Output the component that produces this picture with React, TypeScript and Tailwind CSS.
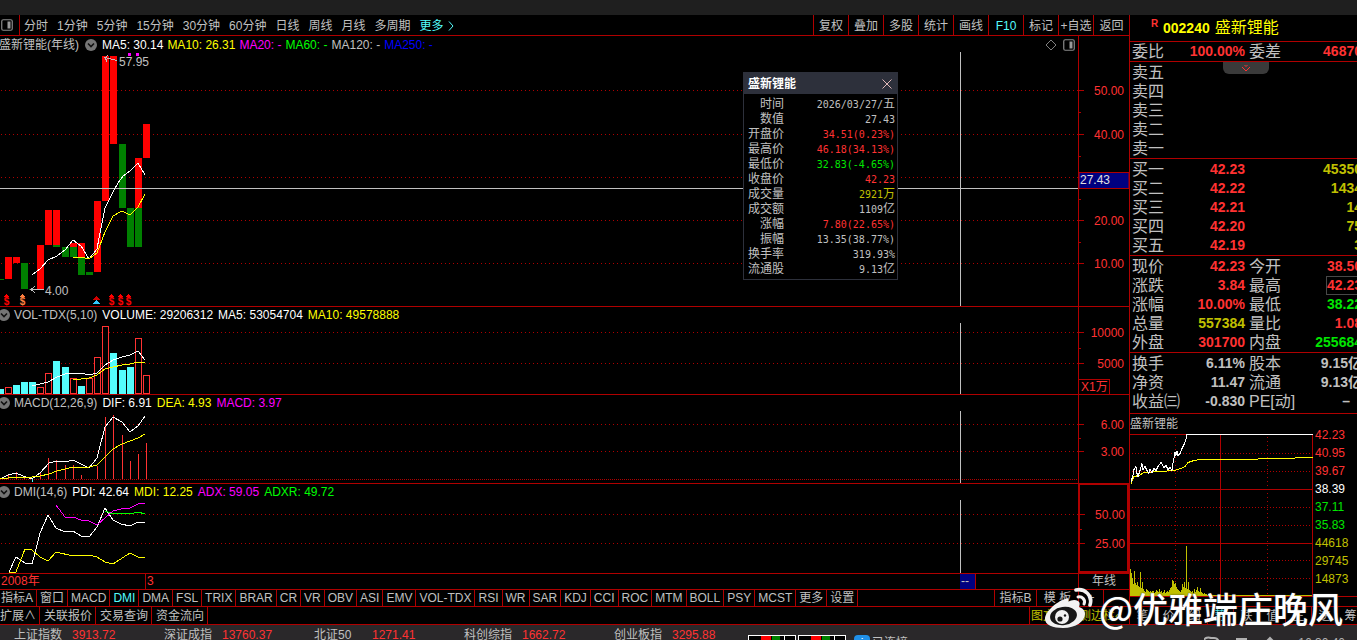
import React, { useState } from 'react';

type Point = [number, number];

interface Readout {
  text: string;
  color: string;
}

interface AxisProps {
  top: number;
  labels: { y: number; text: string }[];
  ticks: number[];
  minor: number[];
  selected?: boolean;
  children?: React.ReactNode;
}

interface PanelProps {
  top: number;
  title: React.ReactNode;
  readouts: Readout[];
  headerClass: string;
  plotClass: string;
  grid: number[];
  extra?: React.ReactNode;
  axis: React.ReactNode;
  children: React.ReactNode;
}

interface QuoteRow {
  label: string;
  value?: string;
  color?: string;
  label2?: string;
  value2?: string;
  color2?: string;
  boxed?: boolean;
}

const RED = '#ff0000';
const GREEN = '#008000';
const LINE = '#b00000';
const HEADER_H = 16;
const CURSOR_X = 960;

const periods = ['分时', '1分钟', '5分钟', '15分钟', '30分钟', '60分钟', '日线', '周线', '月线', '多周期'];
const tools = ['复权', '叠加', '多股', '统计', '画线', 'F10', '标记', '+自选', '返回'];
const indicators = [
  '指标A', '窗口', 'MACD', 'DMI', 'DMA', 'FSL', 'TRIX', 'BRAR', 'CR', 'VR', 'OBV', 'ASI', 'EMV', 'VOL-TDX',
  'RSI', 'WR', 'SAR', 'KDJ', 'CCI', 'ROC', 'MTM', 'BOLL', 'PSY', 'MCST', '更多', '设置'
];
const shortcuts = ['扩展∧', '关联报价', '交易查询', '资金流向'];
const sideTabs = ['笔', '价', '细', '势', '联', '值', '主', '逆', '筹'];

const indices = [
  { name: '上证指数', value: '3913.72' },
  { name: '深证成指', value: '13760.37' },
  { name: '北证50', value: '1271.41' },
  { name: '科创综指', value: '1662.72' },
  { name: '创业板指', value: '3295.88' }
];

// x, top, bottom, color
const candles: [number, number, number, string][] = [
  [-3, 279, 280, GREEN],
  [5, 257, 279, RED],
  [13, 257, 263, RED],
  [21, 263, 289, GREEN],
  [29, 289, 290, GREEN],
  [37, 245, 290, RED],
  [45, 210, 245, RED],
  [53, 210, 245, RED],
  [53, 245, 247, GREEN],
  [62, 247, 257, GREEN],
  [70, 243, 247, RED],
  [70, 247, 257, GREEN],
  [78, 243, 258, RED],
  [78, 258, 275, GREEN],
  [86, 272, 275, GREEN],
  [94, 201, 272, RED],
  [102, 56, 201, RED],
  [110, 56, 144, RED],
  [119, 144, 208, GREEN],
  [127, 208, 247, GREEN],
  [135, 158, 208, RED],
  [135, 208, 247, GREEN],
  [143, 124, 158, RED]
];

// x, top, rising
const volumes: [number, number, boolean][] = [
  [-3, 389, false], [5, 387, true], [13, 385, false], [21, 382, false], [29, 382, false],
  [37, 387, true], [45, 373, true], [53, 361, false], [62, 367, false], [70, 378, true],
  [78, 386, false], [86, 378, true], [94, 357, true], [102, 326, true], [110, 353, false],
  [119, 370, false], [127, 367, false], [135, 338, true], [143, 375, true]
];

const macdBars: Point[] = [
  [8, 475], [16, 472], [24, 477], [40, 473], [48, 458], [56, 460], [65, 465], [73, 465], [81, 475],
  [97, 466], [105, 417], [113, 415], [122, 435], [130, 461], [138, 454], [146, 443]
];

const ma5: Point[] = [
  [32, 275], [40, 269], [48, 260], [57, 256], [65, 250], [73, 240], [81, 246], [89, 259], [97, 249], [99, 238],
  [102, 223], [105, 208], [113, 192], [118, 183], [123, 176], [130, 171], [138, 163], [145, 175]
];
const ma10: Point[] = [
  [73, 258], [81, 257], [89, 259], [97, 253], [105, 232], [113, 216], [122, 211], [130, 215], [138, 207], [145, 194]
];
const volMa5: Point[] = [
  [32, 386], [40, 384], [48, 382], [57, 377], [65, 374], [73, 373], [81, 373], [89, 375], [97, 373], [105, 365],
  [113, 360], [122, 357], [130, 355], [138, 351], [145, 360]
];
const volMa10: Point[] = [
  [73, 379], [81, 379], [89, 378], [97, 375], [105, 369], [113, 367], [122, 365], [130, 364], [138, 362], [145, 363]
];
const dif: Point[] = [
  [0, 479], [8, 475], [16, 473], [23, 476], [32, 479], [40, 473], [49, 463], [57, 461], [65, 462], [73, 460],
  [81, 464], [89, 468], [97, 458], [105, 427], [113, 417], [122, 422], [130, 432], [138, 426], [145, 416]
];
const dea: Point[] = [
  [0, 479], [16, 477], [32, 477], [40, 476], [49, 474], [57, 471], [65, 469], [73, 467], [89, 467], [97, 465],
  [105, 457], [113, 449], [122, 444], [130, 441], [138, 438], [145, 434]
];
const pdi: Point[] = [
  [9, 572], [16, 557], [25, 563], [32, 564], [35, 553], [40, 533], [48, 515], [56, 528], [65, 532], [73, 531],
  [81, 536], [89, 537], [97, 527], [105, 508], [113, 520], [121, 524], [130, 526], [138, 522], [145, 522]
];
const mdi: Point[] = [
  [9, 572], [16, 572], [25, 549], [32, 550], [40, 557], [48, 561], [56, 552], [73, 556], [81, 555], [89, 555],
  [97, 557], [105, 562], [113, 564], [130, 553], [138, 557], [145, 557]
];
const adx: Point[] = [
  [56, 505], [65, 517], [73, 517], [81, 520], [89, 521], [97, 525], [105, 518], [113, 511], [121, 509],
  [130, 508], [138, 504], [145, 503]
];
const adxr: Point[] = [[105, 511], [113, 514], [121, 513], [130, 514], [138, 512], [145, 514]];

// Intraday chart, measured from its own top left corner
const dayPrice: Point[] = [
  [1, 48], [3, 42], [4, 36], [6, 33], [7, 40], [8, 43], [10, 37], [12, 30], [13, 36], [15, 33], [17, 37], [19, 40],
  [20, 36], [22, 39], [24, 35], [26, 37], [28, 33], [31, 29], [34, 34], [36, 32], [38, 36], [40, 34], [42, 37],
  [43, 30], [45, 19], [46, 22], [47, 18], [48, 22], [50, 20], [52, 15], [54, 11], [56, 6], [57, 1], [183, 1]
];
const dayAverage: Point[] = [
  [1, 50], [4, 43], [9, 42], [14, 39], [31, 38], [44, 37], [51, 35], [55, 33], [58, 29], [64, 27], [71, 26],
  [92, 26], [164, 25], [166, 24], [183, 24]
];
const dayVolume = [
  27, 23, 18, 12, 25, 13, 11, 14, 10, 9, 24, 8, 14, 7, 5, 4, 7, 6, 5, 4, 5, 4, 5, 5, 3, 4, 6, 5, 4, 7, 4, 5, 3, 4, 6,
  3, 4, 5, 4, 6, 8, 9, 16, 15, 12, 13, 9, 7, 6, 5, 4, 6, 12, 9, 14, 8, 50, 7, 14, 6, 5, 4, 5, 3, 7, 4, 6, 9, 5, 4, 8,
  4, 3, 2, 3, 2, 2, 1, 2, 1
];
const dayLabels = [
  { text: '42.23', color: '#ff3232' },
  { text: '40.95', color: '#ff3232' },
  { text: '39.67', color: '#ff3232' },
  { text: '38.39', color: '#ffffff' },
  { text: '37.11', color: '#00e600' },
  { text: '35.83', color: '#00e600' },
  { text: '44618', color: '#c0c000' },
  { text: '29745', color: '#c0c000' },
  { text: '14873', color: '#c0c000' }
];

const entrust: QuoteRow[] = [
  { label: '委比', value: '100.00%', color: 'text-[#ff3232]', label2: '委差', value2: '46870', color2: 'text-[#ff3232]' }
];
const asks: QuoteRow[] = [{ label: '卖五' }, { label: '卖四' }, { label: '卖三' }, { label: '卖二' }, { label: '卖一' }];
const bids: QuoteRow[] = [
  { label: '买一', value: '42.23', color: 'text-[#ff3232]', value2: '45350', color2: 'text-[#c0c000]' },
  { label: '买二', value: '42.22', color: 'text-[#ff3232]', value2: '1434', color2: 'text-[#c0c000]' },
  { label: '买三', value: '42.21', color: 'text-[#ff3232]', value2: '14', color2: 'text-[#c0c000]' },
  { label: '买四', value: '42.20', color: 'text-[#ff3232]', value2: '75', color2: 'text-[#c0c000]' },
  { label: '买五', value: '42.19', color: 'text-[#ff3232]', value2: '3', color2: 'text-[#c0c000]' }
];
const summary: QuoteRow[] = [
  { label: '现价', value: '42.23', color: 'text-[#ff3232]', label2: '今开', value2: '38.50', color2: 'text-[#ff3232]' },
  { label: '涨跌', value: '3.84', color: 'text-[#ff3232]', label2: '最高', value2: '42.23', color2: 'text-[#ff3232]', boxed: true },
  { label: '涨幅', value: '10.00%', color: 'text-[#ff3232]', label2: '最低', value2: '38.22', color2: 'text-[#00e600]' },
  { label: '总量', value: '557384', color: 'text-[#c0c000]', label2: '量比', value2: '1.08', color2: 'text-[#ff3232]' },
  { label: '外盘', value: '301700', color: 'text-[#ff3232]', label2: '内盘', value2: '255684', color2: 'text-[#00e600]' }
];
const fundamentals: QuoteRow[] = [
  { label: '换手', value: '6.11%', label2: '股本', value2: '9.15亿' },
  { label: '净资', value: '11.47', label2: '流通', value2: '9.13亿' },
  { label: '收益㈢', value: '-0.830', label2: 'PE[动]', value2: '–' }
];

const details = [
  { label: '时间', value: '2026/03/27/', unit: '五', color: 'text-[#c0c0c0]' },
  { label: '数值', value: '27.43', color: 'text-[#c0c0c0]' },
  { label: '开盘价', value: '34.51(0.23%)', color: 'text-[#ff3232]' },
  { label: '最高价', value: '46.18(34.13%)', color: 'text-[#ff3232]' },
  { label: '最低价', value: '32.83(-4.65%)', color: 'text-[#00e600]' },
  { label: '收盘价', value: '42.23', color: 'text-[#ff3232]' },
  { label: '成交量', value: '2921', unit: '万', color: 'text-[#c0c000]' },
  { label: '成交额', value: '1109', unit: '亿', color: 'text-[#c0c0c0]' },
  { label: '涨幅', value: '7.80(22.65%)', color: 'text-[#ff3232]' },
  { label: '振幅', value: '13.35(38.77%)', color: 'text-[#c0c0c0]' },
  { label: '换手率', value: '319.93%', color: 'text-[#c0c0c0]' },
  { label: '流通股', value: '9.13', unit: '亿', color: 'text-[#c0c0c0]' }
];

const Curve = ({ points, color }: { points: Point[]; color: string }) => (
  <polyline points={points.map((p) => p.join(',')).join(' ')} fill="none" stroke={color} strokeWidth="1" />
);

const ChevronBadge = () => (
  <svg className="h-3 w-3 shrink-0" viewBox="0 0 12 12" aria-hidden="true">
    <circle cx="6" cy="6" r="6" fill="#757575" />
    <path d="M3 4.5 6 7.5 9 4.5" fill="none" stroke="#111" strokeWidth="1.6" />
  </svg>
);

const SplitIcon = ({ className }: { className: string }) => (
  <svg className={className} viewBox="0 0 12 12" aria-hidden="true">
    <rect x="0.75" y="0.75" width="10.5" height="10.5" rx="1.5" fill="none" stroke="#8a8a8a" strokeWidth="1.2" />
    <rect x="6.5" y="2.5" width="3" height="7" fill="#9a9a9a" />
  </svg>
);

const Axis: React.FC<AxisProps> = ({ top, labels, ticks, minor, selected, children }) => (
  <div className={`w-[51px] shrink-0 border-[#b00000] ${selected ? '-mt-px border-2' : 'border-l'}`}>
    <svg className="block h-4 w-full overflow-visible" fontSize="12">
      <g transform={`translate(0,${-top})`}>
        {ticks.map((y) => (
          <rect key={y} x="0" y={y} width="5" height="1" fill={LINE} />
        ))}
        {minor.map((y) => (
          <rect key={y} x="0" y={y} width="2" height="1" fill={LINE} />
        ))}
        {labels.map((l) => (
          <text key={l.text} x="45" y={l.y + 5} textAnchor="end" fill="#ff3232">
            {l.text}
          </text>
        ))}
        {children}
      </g>
    </svg>
  </div>
);

const Panel: React.FC<PanelProps> = ({ top, title, readouts, headerClass, plotClass, grid, extra, axis, children }) => (
  <section className="flex border-b border-[#b00000]">
    <div className="min-w-0 flex-1 overflow-hidden">
      <header className={`flex h-4 items-center leading-4 whitespace-nowrap ${headerClass}`}>
        {title}
        {readouts.map((r) => (
          <span key={r.text} className={r.color}>{r.text}</span>
        ))}
        {extra}
      </header>
      <svg className={`block w-full ${plotClass}`} fontSize="12" shapeRendering="crispEdges">
        <g transform={`translate(0,${-(top + HEADER_H)})`}>
          {grid.map((y) => (
            <line key={y} x1="1" x2="100%" y1={y + 0.5} y2={y + 0.5} stroke={LINE} strokeDasharray="1 3" />
          ))}
          {children}
          <rect x={CURSOR_X} y={top + HEADER_H} width="1" height="300" fill="#c0c0c0" />
        </g>
      </svg>
    </div>
    {axis}
  </section>
);

const Signal = ({ x, color }: { x: number; color: string }) => (
  <g fill={color}>
    <path d={`M${x} 294l3 3h-6z`} />
    <text x={x} y="305" textAnchor="middle" fontSize="10" fontWeight="bold">$</text>
  </g>
);

const QuoteTable = ({ rows, className }: { rows: QuoteRow[]; className: string }) => (
  <div className={`border-b border-[#b00000] ${className}`}>
    <table className="w-[232px] table-fixed border-collapse leading-[19px] whitespace-nowrap">
      <colgroup>
        <col className="w-[35px]" />
        <col className="w-20" />
        <col className="w-11" />
        <col />
      </colgroup>
      <tbody>
        {rows.map((row) => (
          <tr key={row.label} className="h-[19px]">
            <th scope="row" className="p-0 pl-0.5 text-left align-middle text-base leading-[19px] font-normal">
              {row.label}
            </th>
            <td className={`p-0 text-right align-middle text-sm leading-[19px] font-bold ${row.color || ''}`}>{row.value}</td>
            <td className="p-0 pl-1 text-left align-middle text-base leading-[19px]">{row.label2}</td>
            <td className={`p-0 text-right align-middle text-sm leading-[19px] font-bold ${row.color2 || ''} ${row.value2 === '–' ? 'pr-3' : ''}`}>
              <span className={row.boxed ? 'inline-block leading-[17px] outline outline-[#484848]' : ''}>{row.value2}</span>
            </td>
          </tr>
        ))}
      </tbody>
    </table>
  </div>
);

const DetailWindow = ({ onClose }: { onClose: () => void }) => (
  <div className="absolute top-[57px] right-[459px] w-[155px] border border-[#2d303b] bg-black pb-0.5">
    <div className="flex h-[21px] items-center justify-between bg-[#2d303b] px-1 text-xs font-bold text-white">
      盛新锂能
      <button type="button" aria-label="关闭" onClick={onClose}>
        <svg className="h-3 w-3" viewBox="0 0 12 12">
          <path d="M1.5 1.5l9 9M10.5 1.5l-9 9" stroke="#e0b8b8" strokeWidth="1" />
        </svg>
      </button>
    </div>
    <table className="mt-[3px] w-full border-collapse text-xs leading-[15px] whitespace-nowrap">
      <tbody>
        {details.map((d) => (
          <tr key={d.label} className="h-[15px]">
            <th scope="row" className="w-10 p-0 text-right align-middle font-normal">{d.label}</th>
            <td className={`p-0 pr-0.5 text-right align-middle leading-[15px] ${d.color}`}>
              <span className="font-['DejaVu_Sans_Mono','Noto_Sans_CJK_SC',monospace] text-[10px]">{d.value}</span>
              {d.unit}
            </td>
          </tr>
        ))}
      </tbody>
    </table>
  </div>
);

const IntradayChart = () => (
  <div className="flex border-b border-[#b00000]">
    <svg className="block h-[162px] w-[184px] shrink-0" shapeRendering="crispEdges">
      {[19, 37, 73, 91, 126, 144].map((y) => (
        <line key={y} x1="2" x2="183" y1={y + 0.5} y2={y + 0.5} stroke={LINE} strokeDasharray="1 2" />
      ))}
      {[46, 138].map((x) => (
        <line key={x} x1={x - 0.5} x2={x - 0.5} y1="3" y2="162" stroke={LINE} strokeDasharray="1 3" />
      ))}
      {[0, 55, 109].map((y) => (
        <rect key={y} x="0" y={y} width="183" height="1" fill={LINE} />
      ))}
      {[90, 182].map((x) => (
        <rect key={x} x={x} y="0" width="1" height="162" fill={LINE} />
      ))}
      {dayVolume.map((h, i) => (
        <rect key={i} x={i} y={162 - h} width="1" height={h} fill="#c0c000" />
      ))}
      <rect x="80" y="161" width="102" height="1" fill="#c0c000" />
      <g transform="translate(0,-0.5)">
        <Curve points={dayAverage} color="#ffff00" />
        <Curve points={dayPrice} color="#ffffff" />
      </g>
    </svg>
    <ul className="-mt-2 pl-px text-xs leading-[18px]">
      {dayLabels.map((l) => (
        <li key={l.text} style={{ color: l.color }}>{l.text}</li>
      ))}
    </ul>
  </div>
);

const MiniGauge = () => (
  <svg className="mt-4 h-4 w-12" viewBox="0 0 48 16" aria-hidden="true" shapeRendering="crispEdges">
    <rect x="0.5" y="0.5" width="47" height="15" fill="#000" stroke="#fff" />
    <rect x="13" y="1" width="10" height="14" fill="#f00" />
    <rect x="24" y="1" width="8" height="14" fill="#008000" />
    <rect x="36" y="1" width="1" height="14" fill="#fff" />
  </svg>
);

const Watermark = () => (
  <div className="pointer-events-none absolute right-[14px] bottom-[10px] flex items-center gap-1.5 text-white">
    <svg className="h-11 w-12" viewBox="0 0 48 44" aria-hidden="true">
      <path
        d="M20 13C11 16 0 26 0 33c0 6 8 9 18 9 13 0 22-7 22-14 0-4-3-6-6-7 1-3 1-5-1-6-3-2-7-1-10 1 1-3 0-5-3-3z"
        fill="#f2f2f2"
      />
      <ellipse cx="18.500" cy="30" rx="13.500" ry="9" fill="#171717" transform="rotate(-8 18.500 30)" />
      <circle cx="17" cy="31" r="7" fill="#f2f2f2" />
      <circle cx="15" cy="33" r="2.600" fill="#171717" />
      <circle cx="20" cy="29.500" r="1.200" fill="#171717" />
      <path d="M31 4c9-2 17 6 14 15" fill="none" stroke="#f2f2f2" strokeWidth="3.600" strokeLinecap="round" />
      <path d="M33 11c4-1 8 3 6 7" fill="none" stroke="#f2f2f2" strokeWidth="3" strokeLinecap="round" />
    </svg>
    <span className="text-[35px] leading-[44px] font-medium font-['Noto_Sans_CJK_SC',sans-serif] [text-shadow:0_0_2px_#333]">@优雅端庄晚风</span>
  </div>
);

export default function App() {
  const [indicator, setIndicator] = useState('DMI');
  const [showDetail, setShowDetail] = useState(true);

  return (
    <div className="relative flex h-screen w-full flex-col overflow-hidden bg-black font-['Liberation_Sans','Noto_Sans_CJK_SC',sans-serif] text-xs text-[#c0c0c0]">
      <div className="h-[15px] shrink-0 bg-[#1f1f1f]" />

      <div className="relative flex shrink-0">
        <main className="min-w-0 flex-1">
          {/* Period toolbar */}
          <nav className="flex h-[21px] items-stretch justify-between border-b border-[#b00000] whitespace-nowrap">
            <div className="flex items-center">
              <div className="flex w-5 items-center self-stretch border-r border-[#b00000] pl-px">
                <SplitIcon className="h-3 w-3" />
              </div>
              <div className="flex items-center gap-[9px] pt-px pl-1">
                {periods.map((p) => (
                  <button key={p} type="button">{p}</button>
                ))}
                <button type="button" className="flex items-center gap-1 text-[#54fcfc]">
                  更多
                  <svg className="h-[10px] w-[6px]" viewBox="0 0 6 10">
                    <path d="M1 0.5 5 5 1 9.500" fill="none" stroke="#54fcfc" />
                  </svg>
                </button>
              </div>
            </div>
            <div className="flex">
              {tools.map((t) => (
                <button
                  key={t}
                  type="button"
                  className={`w-[35px] border-l border-[#b00000] pt-px text-center last:w-9 ${t === 'F10' ? 'text-[#54fcfc]' : ''}`}
                >
                  {t}
                </button>
              ))}
            </div>
          </nav>

          <Panel
            top={36}
            headerClass="gap-1 pt-px"
            plotClass="h-[254px]"
            title={
              <span className="flex items-center gap-1.5 pr-px">
                <span className="-ml-px">盛新锂能(年线)</span>
                <ChevronBadge />
              </span>
            }
            readouts={[
              { text: 'MA5: 30.14', color: 'text-white' },
              { text: 'MA10: 26.31', color: 'text-[#ffff00]' },
              { text: 'MA20: -', color: 'text-[#ff00ff]' },
              { text: 'MA60: -', color: 'text-[#00ff00]' },
              { text: 'MA120: -', color: 'text-[#c0c0c0]' },
              { text: 'MA250: -', color: 'text-[#0000ff]' }
            ]}
            extra={
              <span className="ml-auto flex items-center gap-1.5 pr-[3px]">
                <svg className="h-3 w-3" viewBox="0 0 12 12" aria-hidden="true">
                  <path d="M6 1l5 5-5 5-5-5z" fill="none" stroke="#808080" />
                </svg>
                <SplitIcon className="h-3 w-3" />
              </span>
            }
            grid={[90, 134, 177, 220, 263]}
            axis={
              <Axis
                top={36}
                ticks={[90, 134, 220, 263]}
                minor={[112, 156, 199, 242]}
                labels={[
                  { y: 90, text: '50.00' },
                  { y: 134, text: '40.00' },
                  { y: 220, text: '20.00' },
                  { y: 263, text: '10.00' }
                ]}
              >
                <rect x="0" y="172.500" width="50" height="16" fill="#000080" stroke={LINE} />
                <text x="1" y="184" fill="#e0e0e0">27.43</text>
              </Axis>
            }
          >
            {candles.map(([x, y1, y2, color], i) => (
              <rect key={i} x={x} y={y1} width="7" height={y2 - y1} fill={color} />
            ))}
            <rect x="128" y="53" width="3" height="3" fill="#ff00ff" />
            <rect x="136" y="53" width="3" height="3" fill="#ff00ff" />
            <rect x="0" y="188" width="100%" height="1" fill="#c0c0c0" />
            <Curve points={ma5} color="#ffffff" />
            <Curve points={ma10} color="#ffff00" />
            <path d="M117 60.500 105 57.500M108 55.500l-3 2 2 4" fill="none" stroke="#c0c0c0" />
            <text x="119" y="66" fill="#c0c0c0">57.95</text>
            <path d="M44 289.500H31M35 286l-4 3.500 4 3.500" fill="none" stroke="#c0c0c0" />
            <text x="45" y="295" fill="#c0c0c0">4.00</text>
            <Signal x={6.5} color="#ff0000" />
            <Signal x={22.5} color="#ff8040" />
            <path d="M96.500 296l4 4h-8z" fill="#d00000" />
            <path d="M96.500 300l4 4h-8z" fill="#30c8ff" />
            <Signal x={111.5} color="#ff0000" />
            <Signal x={120.5} color="#ff0000" />
            <Signal x={128.5} color="#ff0000" />
          </Panel>

          <Panel
            top={307}
            headerClass="gap-[5px]"
            plotClass="h-[71px]"
            title={
              <span className="-ml-0.5 flex items-center gap-1">
                <ChevronBadge />
                VOL-TDX(5,10)
              </span>
            }
            readouts={[
              { text: 'VOLUME: 29206312', color: 'text-white' },
              { text: 'MA5: 53054704', color: 'text-white' },
              { text: 'MA10: 49578888', color: 'text-[#ffff00]' }
            ]}
            grid={[332, 363]}
            axis={
              <Axis
                top={307}
                ticks={[332, 363]}
                minor={[348]}
                labels={[{ y: 332, text: '10000' }, { y: 363, text: '5000' }]}
              >
                <rect x="-0.500" y="379.500" width="31" height="15" fill="none" stroke={LINE} />
                <text x="2" y="391" fill="#ff3232">X1万</text>
              </Axis>
            }
          >
            {volumes.map(([x, y, rising]) =>
              rising ? (
                <rect key={x} x={x + 0.5} y={y + 0.5} width="6" height={393 - y} fill="#000" stroke="#ff3232" />
              ) : (
                <rect key={x} x={x} y={y} width="7" height={394 - y} fill="#54fcfc" />
              )
            )}
            <Curve points={volMa5} color="#ffffff" />
            <Curve points={volMa10} color="#ffff00" />
          </Panel>

          <Panel
            top={395}
            headerClass="gap-[5px]"
            plotClass="h-[72px]"
            title={
              <span className="-ml-0.5 flex items-center gap-1">
                <ChevronBadge />
                MACD(12,26,9)
              </span>
            }
            readouts={[
              { text: 'DIF: 6.91', color: 'text-white' },
              { text: 'DEA: 4.93', color: 'text-[#ffff00]' },
              { text: 'MACD: 3.97', color: 'text-[#ff00ff]' }
            ]}
            grid={[424, 451]}
            axis={
              <Axis
                top={395}
                ticks={[424, 451]}
                minor={[438]}
                labels={[{ y: 424, text: '6.00' }, { y: 451, text: '3.00' }]}
              />
            }
          >
            <line x1="0" x2="100%" y1="479.500" y2="479.500" stroke={LINE} strokeDasharray="1 1" />
            {macdBars.map(([x, y]) => (
              <rect key={x} x={x} y={y} width="1" height={479 - y} fill="#ff3232" />
            ))}
            <rect x="32" y="479" width="1" height="3" fill="#54fcfc" />
            <Curve points={dif} color="#ffffff" />
            <Curve points={dea} color="#ffff00" />
          </Panel>

          <Panel
            top={484}
            headerClass="gap-[5px]"
            plotClass="h-[73px]"
            title={
              <span className="-ml-0.5 flex items-center gap-1">
                <ChevronBadge />
                DMI(14,6)
              </span>
            }
            readouts={[
              { text: 'PDI: 42.64', color: 'text-white' },
              { text: 'MDI: 12.25', color: 'text-[#ffff00]' },
              { text: 'ADX: 59.05', color: 'text-[#ff00ff]' },
              { text: 'ADXR: 49.72', color: 'text-[#00ff00]' }
            ]}
            grid={[514, 543]}
            axis={
              <Axis
                top={485}
                selected
                ticks={[514, 543]}
                minor={[529]}
                labels={[{ y: 514, text: '50.00' }, { y: 543, text: '25.00' }]}
              />
            }
          >
            <Curve points={pdi} color="#ffffff" />
            <Curve points={mdi} color="#ffff00" />
            <Curve points={adx} color="#ff00ff" />
            <Curve points={adxr} color="#00ff00" />
          </Panel>

          {/* Time axis */}
          <div className="flex h-4 items-stretch border-b border-[#b00000] leading-[15px] text-[#ff3232]">
            <div className="w-[145px] pl-px">2008年</div>
            <div className="w-[815px] border-l border-[#b00000] pl-px">3</div>
            <div className="w-4 border-r border-[#b00000] bg-[#000080] pl-px text-[#c0c0c0]">--</div>
            <div className="ml-auto w-[51px] border-l border-[#b00000] text-center text-[#c0c0c0]">年线</div>
          </div>

          {/* Indicator tabs */}
          <nav className="flex h-[17px] items-stretch border-b border-[#b00000] leading-4 whitespace-nowrap">
            {indicators.map((name) => (
              <button
                key={name}
                type="button"
                onClick={() => setIndicator(name)}
                className={`border-r border-[#b00000] px-[3px] first:pl-px ${indicator === name ? 'text-[#54fcfc]' : ''}`}
              >
                {name}
              </button>
            ))}
            <div className="ml-auto flex border-l border-[#b00000]">
              <button type="button" className="w-[42px] border-r border-[#b00000]">指标B</button>
              <button type="button" className="w-[42px] border-r border-[#b00000]">模 板</button>
              <button type="button" className="w-[25px] border-r border-[#b00000]">+</button>
              <button type="button" className="w-[25px]">-</button>
            </div>
          </nav>

          <nav className="flex h-[18px] items-stretch border-b border-[#b00000] leading-4 whitespace-nowrap">
            {shortcuts.map((name) => (
              <button key={name} type="button" className="border-r border-[#b00000] px-[3px] first:pl-0 [&:not(:first-child)]:pl-1">
                {name}
              </button>
            ))}
            <button type="button" className="ml-auto w-[100px] border-l border-[#b00000] pl-px text-left text-[#c0c000]">
              图文F10 侧边栏«
            </button>
          </nav>
        </main>

        {/* Quote column */}
        <aside className="w-[228px] shrink-0 overflow-hidden border-l border-[#b00000]">
          <h1 className="flex h-[27px] items-center border-b border-[#b00000] pl-[21px] text-[#ffff00]">
            <span className="mb-2 w-3 text-[10px] font-bold text-[#ff3232]">R</span>
            <span className="text-sm font-bold">002240</span>
            <span className="pl-[5px] text-base">盛新锂能</span>
          </h1>
          <QuoteTable rows={entrust} className="h-5" />
          <div className="relative">
            <QuoteTable rows={asks} className="h-[97px] pt-px" />
            <button
              type="button"
              aria-label="展开"
              className="absolute top-0 left-[93px] flex h-3 w-[46px] justify-center rounded-b-md bg-[#3a3a3a] pt-0.5"
            >
              <svg className="h-2 w-[10px]" viewBox="0 0 10 8">
                <path d="M1 3l4 4 4-4M3.500 1 5 2.500 6.500 1" fill="none" stroke="#ff3232" />
              </svg>
            </button>
          </div>
          <QuoteTable rows={bids} className="h-[97px] pt-px" />
          <QuoteTable rows={summary} className="h-[97px] pt-px" />
          <QuoteTable rows={fundamentals} className="h-[61px] pt-px" />
          <h2 className="h-5 leading-5">盛新锂能</h2>
          <IntradayChart />
          <div className="h-[10px] border-b border-[#b00000]" />
          <nav className="flex h-[18px] items-stretch border-b border-[#b00000] leading-4">
            {sideTabs.map((t) => (
              <button
                key={t}
                type="button"
                className={`w-[26px] shrink-0 border-r border-[#b00000] ${t === '势' ? 'text-[#54fcfc]' : ''}`}
              >
                {t}
              </button>
            ))}
          </nav>
        </aside>

        {showDetail && <DetailWindow onClose={() => setShowDetail(false)} />}
      </div>

      {/* Market status */}
      <footer className="flex h-5 shrink-0 items-center bg-[#2a282a] pl-3.5 whitespace-nowrap">
        {indices.map((item) => (
          <div key={item.name} className="flex w-[150px]">
            <span className="w-[58px]">{item.name}</span>
            <span className="text-[#ff3232]">{item.value}</span>
          </div>
        ))}
        <div className="-ml-4 flex gap-0.5">
          <MiniGauge />
          <MiniGauge />
        </div>
        <span className="ml-2 h-4 w-4 translate-y-2 rounded-sm bg-[#2090e8] text-center leading-4 text-white">i</span>
        <span className="ml-0.5 translate-y-2">已连接</span>
        <div className="mr-3 ml-auto flex translate-y-2 items-center gap-4 text-[#b0b0b0]">
          <svg className="h-[14px] w-[78px]" viewBox="0 0 78 14" fill="none" stroke="#b0b0b0" strokeWidth="2" aria-hidden="true">
            <path d="M2 12a5 5 0 0 1 5-10h3a5 5 0 0 1 3 9M6 10a4 4 0 0 1 6-4" />
            <path d="M33 12V3h9v9M33 3l4 4" />
            <path d="M66 2l5 5v5H61V7z" fill="#b0b0b0" />
          </svg>
          <span>16:30:40</span>
        </div>
      </footer>

      <Watermark />
    </div>
  );
}
